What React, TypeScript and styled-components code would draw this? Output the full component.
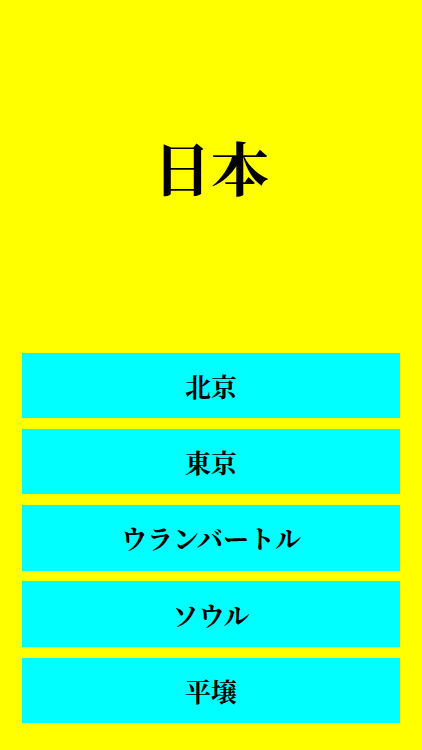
import React from 'react';
import styled, { createGlobalStyle } from 'styled-components';

const GlobalStyle = createGlobalStyle`
  html, body {
    margin: 0;
    padding: 0;
    background: #ffff00;
  }
  body {
    font-family: "Noto Serif CJK JP", "Noto Sans CJK JP", serif;
  }
`;

const Screen = styled.div`
  display: flex;
  flex-direction: column;
  height: 100vh;
  background: #ffff00;
`;

const Header = styled.div`
  flex: 1;
  display: flex;
  align-items: center;
  justify-content: center;
  padding-bottom: 20px;
`;

const Title = styled.h1`
  margin: 0;
  font-size: 58px;
  font-weight: 700;
  color: #000;
  line-height: 1;
`;

const Choices = styled.div`
  display: flex;
  flex-direction: column;
  gap: 10.75px;
  padding: 0 22px 27px;
`;

const Choice = styled.button`
  height: 65.5px;
  border: none;
  background: #00ffff;
  color: #000;
  font-family: inherit;
  font-size: 26px;
  font-weight: 700;
  display: flex;
  align-items: center;
  justify-content: center;
  padding: 0;
  cursor: pointer;
`;

const answers = ['北京', '東京', 'ウランバートル', 'ソウル', '平壌'];

const App: React.FC = () => {
  return (
    <>
      <GlobalStyle />
      <Screen>
        <Header>
          <Title>日本</Title>
        </Header>
        <Choices>
          {answers.map((a) => (
            <Choice key={a}>{a}</Choice>
          ))}
        </Choices>
      </Screen>
    </>
  );
};

export default App;
